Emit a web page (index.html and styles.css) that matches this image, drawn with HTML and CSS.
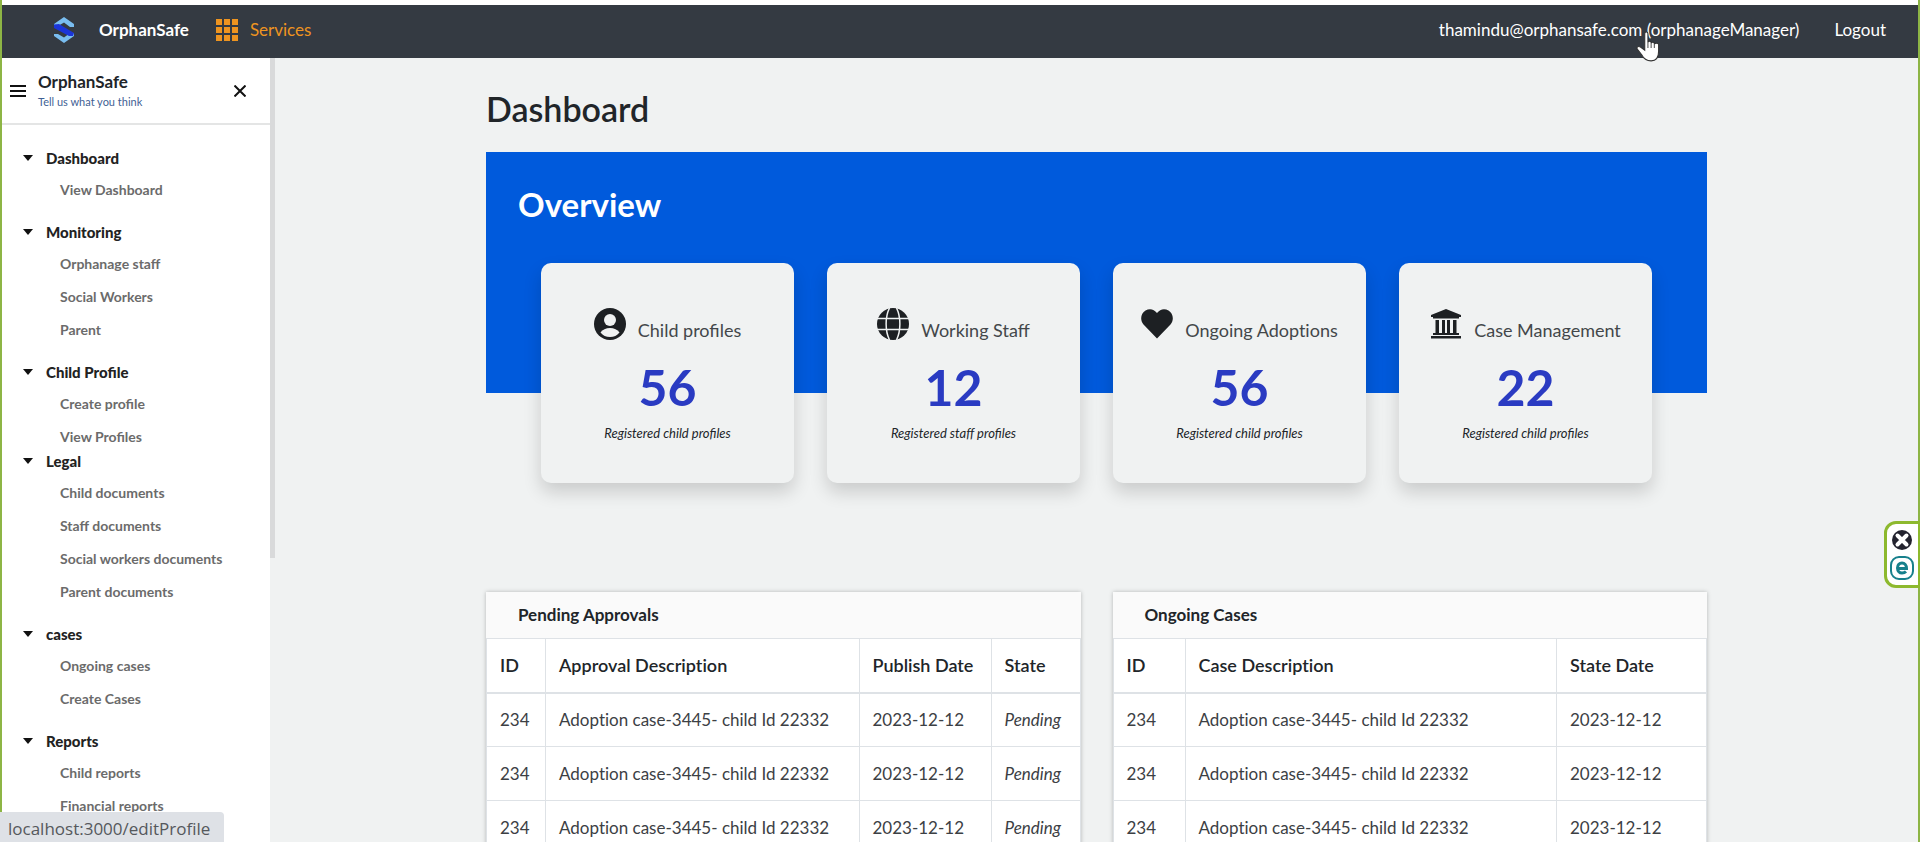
FILE: index.html
```html
<!DOCTYPE html>
<html lang="en">
<head>
<meta charset="utf-8">
<title>OrphanSafe</title>
<link rel="stylesheet" href="styles.css">
</head>
<body>
<div class="app">
  <header class="navbar">
    <a class="brand" href="#">
      <svg class="brand-logo" viewBox="0 0 20 28" aria-hidden="true">
        <path d="M0 8 10 1l10 7v3h-4L10 6.500 4 10H0z" fill="#79bdf0"/>
        <path d="M0 20 10 27l10-7v-3h-4l-6 4.500L4 18H0z" fill="#79bdf0"/>
        <path d="M0 8.500 5 8l15 9-1 3h-4L0 12z" fill="#1b35d8"/>
      </svg>
      <span>OrphanSafe</span>
    </a>
    <a class="services" href="#">
      <svg class="services-icon" viewBox="0 0 22 22" fill="currentColor" aria-hidden="true">
        <path d="M0 0h6v6H0zM8 0h6v6H8zM16 0h6v6h-6zM0 8h6v6H0zM8 8h6v6H8zM16 8h6v6h-6zM0 16h6v6H0zM8 16h6v6H8zM16 16h6v6h-6z"/>
      </svg>
      <span>Services</span>
    </a>
    <nav class="account">
      <a href="#">thamindu@orphansafe.com (orphanageManager)</a>
      <a href="#">Logout</a>
    </nav>
  </header>

  <div class="body">
    <aside class="sidebar">
      <div class="sidebar-head">
        <button class="icon-button" aria-label="Menu">
          <svg width="16" height="12" viewBox="0 0 16 12" aria-hidden="true"><path d="M0 1h16M0 6h16M0 11h16" stroke="#111" stroke-width="2"/></svg>
        </button>
        <div class="sidebar-title">
          <h2>OrphanSafe</h2>
          <a href="#">Tell us what you think</a>
        </div>
        <button class="icon-button" aria-label="Close">
          <svg width="12" height="12" viewBox="0 0 12 12" aria-hidden="true"><path d="m.5.5 11 11M11.500.5l-11 11" stroke="#111" stroke-width="2"/></svg>
        </button>
      </div>
      <nav class="menu">
        <section class="group">
          <button class="group-head">Dashboard</button>
          <div class="links"><a href="#">View Dashboard</a></div>
        </section>
        <section class="group">
          <button class="group-head">Monitoring</button>
          <div class="links"><a href="#">Orphanage staff</a><a href="#">Social Workers</a><a href="#">Parent</a></div>
        </section>
        <section class="group group-tight">
          <button class="group-head">Child Profile</button>
          <div class="links"><a href="#">Create profile</a><a href="#">View Profiles</a></div>
        </section>
        <section class="group">
          <button class="group-head">Legal</button>
          <div class="links"><a href="#">Child documents</a><a href="#">Staff documents</a><a href="#">Social workers documents</a><a href="#">Parent documents</a></div>
        </section>
        <section class="group">
          <button class="group-head">cases</button>
          <div class="links"><a href="#">Ongoing cases</a><a href="#">Create Cases</a></div>
        </section>
        <section class="group">
          <button class="group-head">Reports</button>
          <div class="links"><a href="#">Child reports</a><a href="#">Financial reports</a></div>
        </section>
      </nav>
    </aside>
    <div class="rail"></div>

    <main class="main">
      <div class="content">
        <h1>Dashboard</h1>
        <section class="overview">
          <h2>Overview</h2>
          <div class="cards">
            <article class="card">
              <div class="card-head">
                <svg class="card-icon" viewBox="0 0 32 32" aria-hidden="true"><circle cx="16" cy="16" r="16" fill="#1d2023"/><circle cx="16" cy="12" r="6" fill="#f0f2f2"/><path d="M6.500 24.500C8.500 21.500 12 20 16 20s7.500 1.500 9.500 4.500C23 27.500 20 29 16 29S9 27.500 6.500 24.500z" fill="#f0f2f2"/></svg>
                <span>Child profiles</span>
              </div>
              <strong>56</strong>
              <em>Registered child profiles</em>
            </article>
            <article class="card">
              <div class="card-head">
                <svg class="card-icon" viewBox="0 0 32 32" aria-hidden="true"><circle cx="16" cy="16" r="16" fill="#1d2023"/><path d="M0 10.500h32M0 21.500h32M12.500 0C8 9 8 23 12.500 32M19.500 0c4.500 9 4.500 23 0 32" fill="none" stroke="#f0f2f2" stroke-width="1.500"/></svg>
                <span>Working Staff</span>
              </div>
              <strong>12</strong>
              <em>Registered staff profiles</em>
            </article>
            <article class="card card-plain">
              <div class="card-head">
                <svg class="card-icon" viewBox="0 0 32 32" aria-hidden="true"><path d="M16 30.500 2.500 16.500C-1.500 12 0 5 4.500 2.500 8.500 0 13 1 16 5c3-4 7.500-5 11.500-2.500C32 5 33.500 12 29.500 16.500z" fill="#1d2023"/></svg>
                <span>Ongoing Adoptions</span>
              </div>
              <strong>56</strong>
              <em>Registered child profiles</em>
            </article>
            <article class="card">
              <div class="card-head">
                <svg class="card-icon" viewBox="0 0 32 32" aria-hidden="true"><path d="M16 1 31 7v2h-2v1.500H3V9H1V7zM5.500 12H9v13h3V12h3v13h2V12h3v13h3V12h3.500v13H29v2H3v-2h2.500zM1 28h30v2.500H1z" fill="#1d2023"/></svg>
                <span>Case Management</span>
              </div>
              <strong>22</strong>
              <em>Registered child profiles</em>
            </article>
          </div>
        </section>

        <div class="panels">
          <section class="panel">
            <h3>Pending Approvals</h3>
            <table class="approvals">
              <thead><tr><th>ID</th><th>Approval Description</th><th>Publish Date</th><th>State</th></tr></thead>
              <tbody>
                <tr><td>234</td><td>Adoption case-3445- child Id 22332</td><td>2023-12-12</td><td><i>Pending</i></td></tr>
                <tr><td>234</td><td>Adoption case-3445- child Id 22332</td><td>2023-12-12</td><td><i>Pending</i></td></tr>
                <tr><td>234</td><td>Adoption case-3445- child Id 22332</td><td>2023-12-12</td><td><i>Pending</i></td></tr>
              </tbody>
            </table>
          </section>
          <section class="panel">
            <h3>Ongoing Cases</h3>
            <table class="cases">
              <thead><tr><th>ID</th><th>Case Description</th><th>State Date</th></tr></thead>
              <tbody>
                <tr><td>234</td><td>Adoption case-3445- child Id 22332</td><td>2023-12-12</td></tr>
                <tr><td>234</td><td>Adoption case-3445- child Id 22332</td><td>2023-12-12</td></tr>
                <tr><td>234</td><td>Adoption case-3445- child Id 22332</td><td>2023-12-12</td></tr>
              </tbody>
            </table>
          </section>
        </div>
      </div>
    </main>
  </div>
</div>

<div class="status">localhost:3000/editProfile</div>

<div class="widget">
  <button aria-label="Close widget">
    <svg width="20" height="20" viewBox="0 0 20 20" aria-hidden="true"><circle cx="10" cy="10" r="10" fill="#23232f"/><path d="m5.500 5.500 9 9M14.500 5.500l-9 9" stroke="#fff" stroke-width="4" stroke-linecap="round"/></svg>
  </button>
  <button aria-label="Open widget">
    <svg width="24" height="24" viewBox="0 0 24 24" aria-hidden="true"><rect x="1" y="1" width="22" height="22" rx="8" fill="#fff" stroke="#17808c" stroke-width="2"/><path d="M7.500 12.500h9C16.500 9 14.500 7 12 7s-4.500 2-4.500 5 2 5 4.500 5c1.800 0 3-.5 4-1.500" fill="none" stroke="#17808c" stroke-width="3"/></svg>
  </button>
</div>

<svg class="cursor" width="26" height="32" viewBox="0 0 24 30" aria-hidden="true"><path d="M8 2.500c0-2 3-2 3 0V11c0-2 3-2 3 0v1c0-2 3-2 3 0v1c0-2 4-2 4 0v6c0 6-3 9-7 9-5 0-7-2-9-6l-4-5c-1-2 1-3 3-2l4 3z" fill="#fff" stroke="#333" stroke-width="1"/><path d="M11 11v5M14 12v4M17 13v3" stroke="#555" stroke-width="1"/></svg>
</body>
</html>
```
FILE: styles.css
```css
* { box-sizing: border-box; }
body {
  margin: 0;
  font-family: Lato, "Liberation Sans", sans-serif;
  font-size: 17px;
  color: #212529;
  background: #f0f2f2;
}
h1, h2, h3 { margin: 0; }
a { color: inherit; text-decoration: none; }
button { padding: 0; border: 0; background: none; font: inherit; color: inherit; cursor: pointer; }

.app {
  display: flex;
  flex-direction: column;
  height: 100vh;
  overflow: hidden;
  border: solid #8db545;
  border-width: 0 2px;
}

.navbar {
  display: flex;
  align-items: center;
  flex: none;
  height: 58px;
  padding: 0 32px 4px 52px;
  border-top: 5px solid #fff;
  background: #343a42;
  color: #fff;
}
.brand { display: flex; align-items: center; gap: 25px; font-weight: 700; }
.brand-logo { width: 20px; height: 28px; }
.services { display: flex; align-items: center; gap: 12px; margin-left: 27px; color: #ee9420; }
.services-icon { width: 22px; height: 22px; }
.account { display: flex; gap: 35px; margin-left: auto; }

.body { display: flex; flex: 1; min-height: 0; }
.sidebar { flex: none; width: 268px; overflow: hidden; background: #fff; }
.sidebar-head {
  display: flex;
  align-items: center;
  gap: 12px;
  height: 67px;
  padding: 0 24px 0 8px;
  border-bottom: 2px solid #e4e5e5;
}
.icon-button { display: flex; }
.sidebar-title { flex: 1; }
.sidebar-title h2 { font-size: 17px; line-height: 22px; }
.sidebar-title a { display: block; font-size: 11px; line-height: 18px; color: #3f5f94; }
.menu { padding: 25px 0 0 21px; }
.group { padding-bottom: 18px; }
.group-tight { padding-bottom: 0; }
.group-head {
  display: flex;
  align-items: center;
  gap: 13px;
  height: 16px;
  margin-bottom: 7px;
  font-size: 15px;
  font-weight: 900;
  color: #222;
}
.group-head::before {
  content: "";
  border: solid transparent;
  border-width: 6px 5px 0;
  border-top-color: #111;
}
.links { display: grid; padding-left: 37px; }
.links a { font-size: 14px; line-height: 33px; font-weight: 700; color: #6b6b6b; }
.rail { flex: none; width: 5px; height: 500px; background: #d9dadb; }

.main { flex: 1; min-width: 0; overflow: hidden; }
.content { width: min(1221px, 100% - 48px); margin: 0 auto; padding-top: 31px; }
h1 { margin-bottom: 23px; font-size: 34px; line-height: 40px; font-weight: 600; }
.overview { height: 241px; padding: 32px 55px 0; background: #005adc; }
.overview h2 { margin-left: -23px; margin-bottom: 39px; font-size: 33px; line-height: 40px; color: #fff; }
.cards { display: grid; grid-template-columns: repeat(4, 1fr); gap: 33px; }
.card {
  display: flex;
  flex-direction: column;
  align-items: center;
  height: 220px;
  padding-top: 42px;
  border-radius: 10px;
  background: #f0f2f2;
  box-shadow: 0 9px 18px rgba(0, 0, 0, .16);
}
.card-head { display: flex; align-items: flex-end; gap: 12px; height: 38px; font-size: 18px; color: #43474a; }
.card-plain .card-head { font-variant-ligatures: none; }
.card-head span { line-height: 26px; }
.card-icon { width: 32px; height: 32px; margin-bottom: 3px; }
.card strong { margin-top: 14px; font-size: 50px; line-height: 60px; font-weight: 700; color: #2a3bc2; }
.card em { margin-top: 6px; font-size: 13px; line-height: 20px; }

.panels { display: grid; grid-template-columns: 1fr 1fr; gap: 32px; margin-top: 199px; }
.panel { background: #fff; box-shadow: 0 0 4px rgba(0, 0, 0, .25); font-variant-ligatures: none; }
.panel h3 { padding: 0 32px; font-size: 17px; line-height: 46px; background: #fafafa; }
table { width: 100%; border-collapse: collapse; table-layout: fixed; }
th, td { height: 54px; padding: 0 13px; border: 1px solid #dee2e6; text-align: left; white-space: nowrap; }
th { border-bottom-width: 2px; font-size: 18px; font-weight: 600; }
td { color: #3c4044; }
th:first-child { width: 59px; }
.approvals th:nth-child(3) { width: 132px; }
.approvals th:nth-child(4) { width: 89px; }
.cases th:first-child { width: 72px; }
.cases th:last-child { width: 150px; }

.status {
  position: fixed;
  left: 0;
  bottom: 0;
  padding: 3px 14px 0 8px;
  border-top-right-radius: 4px;
  background: #dee1e6;
  color: #55585c;
  font: 17px/27px "Open Sans", sans-serif;
}
.widget {
  position: fixed;
  right: 0;
  top: 521px;
  display: grid;
  justify-items: center;
  gap: 6px;
  padding: 6px 4px 5px 3px;
  border: 3px solid #8db92e;
  border-right-width: 2px;
  border-radius: 12px 0 0 12px;
  background: #fff;
}
.widget button { display: flex; }
.cursor { position: fixed; left: 1636px; top: 31px; }
```
